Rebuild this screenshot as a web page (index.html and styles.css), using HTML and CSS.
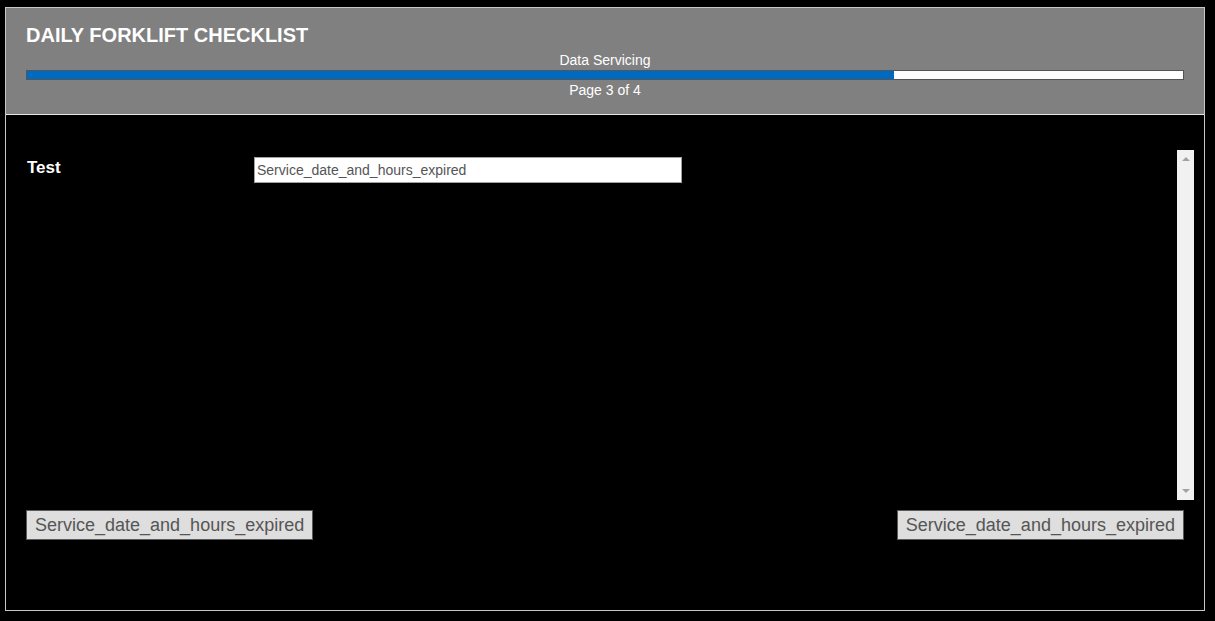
FILE: index.html
```html
<!DOCTYPE html>
<html lang="en">
<head>
    <meta charset="UTF-8">
    <title>Daily Forklift Checklist</title>
    <link rel="stylesheet" href="styles.css">
</head>
<body>
    <div class="form-frame">
        <div class="form-header">
            <div class="form-title">DAILY FORKLIFT CHECKLIST</div>
            <div class="page-name">Data Servicing</div>
            <div class="progress">
                <div class="progress-fill" style="width: 75%"></div>
            </div>
            <div class="page-count">Page 3 of 4</div>
        </div>

        <div class="form-body">
            <div class="scroll-box">
                <div class="fields">
                    <div class="field-row">
                        <div class="field-label">Test</div>
                        <input class="field-input" type="text" value="Service_date_and_hours_expired" readonly>
                    </div>
                </div>
                <div class="scroll-track">
                    <span class="arrow-up"></span>
                    <span class="arrow-down"></span>
                </div>
            </div>

            <div class="nav-buttons">
                <button class="nav-btn">Service_date_and_hours_expired</button>
                <button class="nav-btn">Service_date_and_hours_expired</button>
            </div>
        </div>
    </div>
</body>
</html>
```

FILE: styles.css
```css
html, body {
    margin: 0;
    padding: 0;
    background: #000;
}

body {
    padding: 7px 5px;
    font-family: "Liberation Sans", Arial, sans-serif;
}

.form-frame {
    width: 1198px;
    height: 602px;
    border: 1px solid #c8c8c8;
    display: flex;
    flex-direction: column;
}

.form-header {
    background: #808080;
    border-bottom: 1px solid #e6e6e6;
    padding: 16px 20px 16px 20px;
    color: #fff;
}

.form-title {
    font-size: 20px;
    line-height: 23px;
    font-weight: bold;
}

.page-name {
    margin-top: 5px;
    font-size: 14px;
    line-height: 16px;
    text-align: center;
}

.progress {
    margin-top: 2px;
    height: 8px;
    border: 1px solid #555;
    background: #fff;
}

.progress-fill {
    height: 100%;
    background: #0069c0;
}

.page-count {
    margin-top: 2px;
    font-size: 14px;
    line-height: 16px;
    text-align: center;
}

.form-body {
    flex: 1;
    padding: 35px 10px 0 10px;
}

.scroll-box {
    height: 350px;
    display: flex;
}

.fields {
    flex: 1;
    padding: 7px 10px;
}

.field-row {
    display: flex;
    align-items: flex-start;
}

.field-label {
    width: 227px;
    padding-left: 1px;
    color: #fff;
    font-size: 17px;
    line-height: 21px;
    font-weight: bold;
}

.field-input {
    width: 428px;
    height: 26px;
    box-sizing: border-box;
    margin: 0;
    padding: 0 2px;
    border: 1px solid #a0a0a0;
    background: #fff;
    color: #555;
    font-family: "Liberation Sans", Arial, sans-serif;
    font-size: 14px;
}

.scroll-track {
    width: 17px;
    background: #f1f1f1;
    display: flex;
    flex-direction: column;
    justify-content: space-between;
    align-items: center;
    padding: 7px 0;
    box-sizing: border-box;
}

.arrow-up,
.arrow-down {
    width: 0;
    height: 0;
    border-left: 4px solid transparent;
    border-right: 4px solid transparent;
}

.arrow-up {
    border-bottom: 4px solid #a3a3a3;
}

.arrow-down {
    border-top: 4px solid #a3a3a3;
}

.nav-buttons {
    margin-top: 10px;
    padding: 0 10px;
    display: flex;
    justify-content: space-between;
}

.nav-btn {
    height: 30px;
    margin: 0;
    padding: 0 8px;
    border: 1px solid #5a5a5a;
    border-radius: 0;
    background: #dedede;
    color: #555;
    font-family: "Liberation Sans", Arial, sans-serif;
    font-size: 18px;
}
```
